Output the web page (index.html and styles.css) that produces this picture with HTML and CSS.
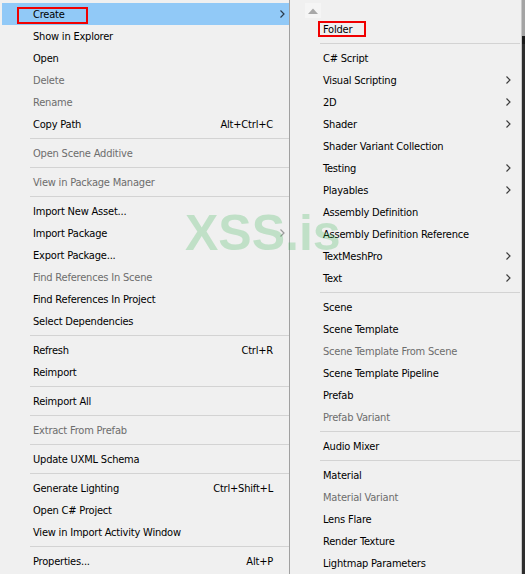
FILE: index.html
```html
<!DOCTYPE html>
<html>
<head>
<meta charset="utf-8">
<link rel="stylesheet" href="styles.css">
</head>
<body>
<div class="screen">
  <div class="menu menu-main">
    <div class="item hover"><span class="label">Create</span><span class="sub"><svg viewBox="0 0 5 8" width="5" height="8"><polyline points="0.5,0.5 4,4 0.5,7.5"/></svg></span></div>
    <div class="item"><span class="label">Show in Explorer</span><span class="sub"></span></div>
    <div class="item"><span class="label">Open</span><span class="sub"></span></div>
    <div class="item off"><span class="label">Delete</span><span class="sub"></span></div>
    <div class="item off"><span class="label">Rename</span><span class="sub"></span></div>
    <div class="item"><span class="label">Copy Path</span><span class="key">Alt+Ctrl+C</span><span class="sub"></span></div>
    <div class="sep"></div>
    <div class="item off"><span class="label">Open Scene Additive</span><span class="sub"></span></div>
    <div class="sep"></div>
    <div class="item off"><span class="label">View in Package Manager</span><span class="sub"></span></div>
    <div class="sep"></div>
    <div class="item"><span class="label">Import New Asset...</span><span class="sub"></span></div>
    <div class="item"><span class="label">Import Package</span><span class="sub pale"><svg viewBox="0 0 5 8" width="5" height="8"><polyline points="0.5,0.5 4,4 0.5,7.5"/></svg></span></div>
    <div class="item"><span class="label">Export Package...</span><span class="sub"></span></div>
    <div class="item off"><span class="label">Find References In Scene</span><span class="sub"></span></div>
    <div class="item"><span class="label">Find References In Project</span><span class="sub"></span></div>
    <div class="item"><span class="label">Select Dependencies</span><span class="sub"></span></div>
    <div class="sep"></div>
    <div class="item"><span class="label">Refresh</span><span class="key">Ctrl+R</span><span class="sub"></span></div>
    <div class="item"><span class="label">Reimport</span><span class="sub"></span></div>
    <div class="sep"></div>
    <div class="item"><span class="label">Reimport All</span><span class="sub"></span></div>
    <div class="sep"></div>
    <div class="item off"><span class="label">Extract From Prefab</span><span class="sub"></span></div>
    <div class="sep"></div>
    <div class="item"><span class="label">Update UXML Schema</span><span class="sub"></span></div>
    <div class="sep"></div>
    <div class="item"><span class="label">Generate Lighting</span><span class="key">Ctrl+Shift+L</span><span class="sub"></span></div>
    <div class="item"><span class="label">Open C# Project</span><span class="sub"></span></div>
    <div class="item"><span class="label">View in Import Activity Window</span><span class="sub"></span></div>
    <div class="sep"></div>
    <div class="item"><span class="label">Properties...</span><span class="key">Alt+P</span><span class="sub"></span></div>
  </div>
  <div class="menu menu-create">
    <div class="scroll-up"><span class="up-btn"><svg viewBox="0 0 10 6" width="10" height="6"><polygon points="0,6 5,0.5 10,6"/></svg></span></div>
    <div class="item"><span class="label">Folder</span><span class="sub"></span></div>
    <div class="sep"></div>
    <div class="item"><span class="label">C# Script</span><span class="sub"></span></div>
    <div class="item"><span class="label">Visual Scripting</span><span class="sub"><svg viewBox="0 0 5 8" width="5" height="8"><polyline points="0.5,0.5 4,4 0.5,7.5"/></svg></span></div>
    <div class="item"><span class="label">2D</span><span class="sub"><svg viewBox="0 0 5 8" width="5" height="8"><polyline points="0.5,0.5 4,4 0.5,7.5"/></svg></span></div>
    <div class="item"><span class="label">Shader</span><span class="sub"><svg viewBox="0 0 5 8" width="5" height="8"><polyline points="0.5,0.5 4,4 0.5,7.5"/></svg></span></div>
    <div class="item"><span class="label">Shader Variant Collection</span><span class="sub"></span></div>
    <div class="item"><span class="label">Testing</span><span class="sub"><svg viewBox="0 0 5 8" width="5" height="8"><polyline points="0.5,0.5 4,4 0.5,7.5"/></svg></span></div>
    <div class="item"><span class="label">Playables</span><span class="sub"><svg viewBox="0 0 5 8" width="5" height="8"><polyline points="0.5,0.5 4,4 0.5,7.5"/></svg></span></div>
    <div class="item"><span class="label">Assembly Definition</span><span class="sub"></span></div>
    <div class="item"><span class="label">Assembly Definition Reference</span><span class="sub"></span></div>
    <div class="item"><span class="label">TextMeshPro</span><span class="sub"><svg viewBox="0 0 5 8" width="5" height="8"><polyline points="0.5,0.5 4,4 0.5,7.5"/></svg></span></div>
    <div class="item"><span class="label">Text</span><span class="sub"><svg viewBox="0 0 5 8" width="5" height="8"><polyline points="0.5,0.5 4,4 0.5,7.5"/></svg></span></div>
    <div class="sep"></div>
    <div class="item"><span class="label">Scene</span><span class="sub"></span></div>
    <div class="item"><span class="label">Scene Template</span><span class="sub"></span></div>
    <div class="item off"><span class="label">Scene Template From Scene</span><span class="sub"></span></div>
    <div class="item"><span class="label">Scene Template Pipeline</span><span class="sub"></span></div>
    <div class="item"><span class="label">Prefab</span><span class="sub"></span></div>
    <div class="item off"><span class="label">Prefab Variant</span><span class="sub"></span></div>
    <div class="sep"></div>
    <div class="item"><span class="label">Audio Mixer</span><span class="sub"></span></div>
    <div class="sep"></div>
    <div class="item"><span class="label">Material</span><span class="sub"></span></div>
    <div class="item off"><span class="label">Material Variant</span><span class="sub"></span></div>
    <div class="item"><span class="label">Lens Flare</span><span class="sub"></span></div>
    <div class="item"><span class="label">Render Texture</span><span class="sub"></span></div>
    <div class="item"><span class="label">Lightmap Parameters</span><span class="sub"></span></div>
  </div>
  <div class="editor-edge"></div>
  <div class="mark mark-create"></div>
  <div class="mark mark-folder"></div>
  <div class="watermark" aria-hidden="true">XSS.is</div>
</div>
</body>
</html>
```
FILE: styles.css
```css
* { box-sizing: border-box; }
html, body {
  margin: 0;
  padding: 0;
  background: #f0f0f0;
}
.screen {
  position: relative;
  display: flex;
  width: 525px;
  height: 574px;
  overflow: hidden;
  font-family: "DejaVu Sans Condensed", "DejaVu Sans", sans-serif;
  font-stretch: condensed;
  font-size: 11px;
  letter-spacing: -0.2px;
  color: #000;
}
.menu {
  background: #f0f0f0;
  display: flex;
  flex-direction: column;
}
.menu-main {
  width: 290px;
  padding: 3px 0 0 2px;
  border-right: 1px solid #a0a0a0;
}
.menu-create {
  width: 232px;
  border-right: 1px solid #c8c8c8;
}
.item {
  height: 22px;
  flex: none;
  display: flex;
  align-items: center;
  padding-left: 31px;
  white-space: nowrap;
}
.menu-create .item { padding-left: 33px; }
.item .label { flex: 1; }
.item .sub {
  width: 16px;
  height: 22px;
  display: flex;
  align-items: center;
  justify-content: center;
  padding-left: 2px;
}
.menu-create .item .sub { width: 23px; padding-left: 0; padding-right: 3px; }
.item .sub svg polyline {
  fill: none;
  stroke: #3c3c3c;
  stroke-width: 1.2;
}
.item .sub.pale svg polyline { stroke: #9a9a9a; }
.item.hover { background: #91c9f7; }
.item.hover .sub svg polyline { stroke: #2a3a4a; }
.item.off { color: #6d6d6d; }
.sep {
  height: 7px;
  flex: none;
  margin-left: 28px;
}
.menu-create .sep { margin-left: 30px; margin-right: 1px; }
.sep::after {
  content: "";
  display: block;
  margin-top: 3px;
  height: 1px;
  background: #d3d3d3;
}
.scroll-up {
  height: 18px;
  flex: none;
  display: flex;
  padding-left: 15px;
  padding-top: 3px;
}
.up-btn {
  width: 16px;
  height: 15px;
  background: #f5f5f5;
  display: flex;
  align-items: center;
  justify-content: center;
}
.up-btn svg polygon { fill: #a8a8a8; }
.editor-edge {
  flex: 1;
  background: linear-gradient(#a4a4a4 0, #a4a4a4 36px, #1c1c1c 36px, #1c1c1c 44px, #2e2e2e 44px, #2e2e2e 100%);
}
.mark {
  position: absolute;
  border: 2px solid #f00000;
}
.mark-create { left: 17px; top: 7px; width: 71px; height: 17px; }
.mark-folder { left: 318px; top: 21px; width: 48px; height: 16px; }
.watermark {
  position: absolute;
  left: 185px;
  top: 198px;
  font-family: "Liberation Sans", Arial, sans-serif;
  font-stretch: normal;
  font-weight: bold;
  font-size: 50px;
  letter-spacing: 0;
  line-height: 70px;
  color: rgba(40, 175, 70, 0.24);
  pointer-events: none;
}
```
